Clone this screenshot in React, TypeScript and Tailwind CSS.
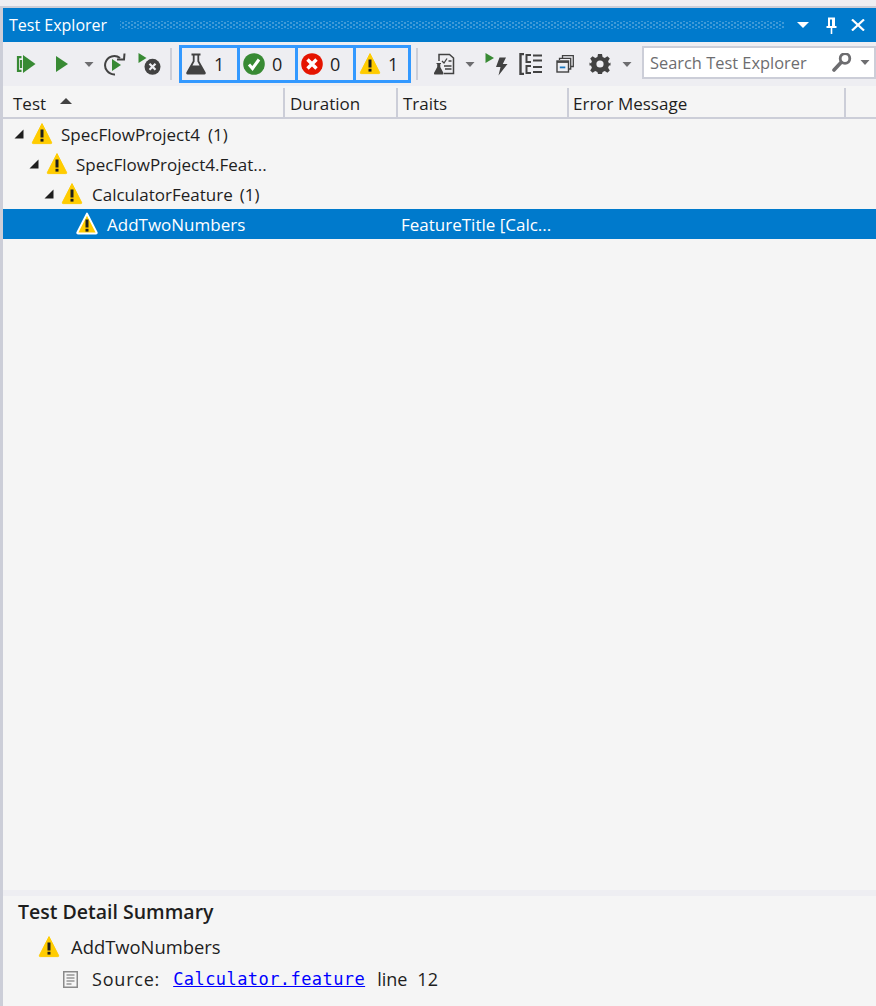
const font = '"Open Sans", "Noto Sans", sans-serif';

const Caret = ({ className = '', color = '#6d6d70' }: { className?: string; color?: string }) => (
  <svg width="10" height="5" viewBox="0 0 10 5" className={className}>
    <path d="M0.5 0H9.5L5 5Z" fill={color} />
  </svg>
);

const Warning = ({ selected = false, className = '' }: { selected?: boolean; className?: string }) => (
  <svg width="24" height="24" viewBox="0 0 24 24" className={className}>
    <path
      d="M12 1.6 L21.6 20.4 Q22 21.6 20.8 21.6 H3.2 Q2 21.6 2.4 20.4 Z"
      fill="#ffcc00"
      stroke={selected ? '#ffffff' : '#ffcc00'}
      strokeWidth={selected ? 2 : 1}
      strokeLinejoin="round"
    />
    <rect x="10.5" y="7.5" width="3" height="8" fill="#1e1e1e" />
    <rect x="10.5" y="16.8" width="3" height="2.8" fill="#1e1e1e" />
  </svg>
);

const Flask = ({ size = 22, color = '#424242' }: { size?: number; color?: string }) => (
  <svg width={size} height={size} viewBox="0 0 22 22">
    <path d="M6.5 0.5H15.5V2.5H14.2V8L20.7 19.5Q21.2 21.5 19.5 21.5H2.5Q0.8 21.5 1.3 19.5L7.8 8V2.5H6.5Z" fill={color} />
    <path d="M9.6 2.5H12.4V8.5L14.6 12.5H7.4L9.6 8.5Z" fill="#eeeef2" />
  </svg>
);

const RunAll = () => (
  <svg width="20" height="20" viewBox="0 0 20 20" className="ml-[16px]">
    <path d="M7 1L19.5 10L7 19Z" fill="#388a34" />
    <path d="M5.5 3.2H2V16.8H5.5M5 6V14" fill="none" stroke="#388a34" strokeWidth="2.2" />
  </svg>
);

const RunOne = () => (
  <svg width="14" height="18" viewBox="0 0 14 18" className="ml-[19px]">
    <path d="M1 1L13 9L1 17Z" fill="#388a34" />
  </svg>
);

const Rerun = () => (
  <svg width="22" height="24" viewBox="0 0 22 24" className="ml-[10px]">
    <path d="M16 6A9.2 9.2 0 1 0 11 22.4" fill="none" stroke="#424242" strokeWidth="2" />
    <path d="M13 7.5L20 7.5L20.5 1.5" fill="none" stroke="#424242" strokeWidth="2" />
    <path d="M8 7L17 13L8 19Z" fill="#388a34" />
  </svg>
);

const CancelRun = () => (
  <svg width="23" height="24" viewBox="0 0 23 24" className="ml-[12px]">
    <path d="M0.5 1L8.5 6L0.5 11Z" fill="#388a34" />
    <circle cx="14.5" cy="14.8" r="8" fill="#424242" />
    <path d="M11.5 11.8L17.5 17.8M17.5 11.8L11.5 17.8" stroke="#eeeef2" strokeWidth="2.2" />
  </svg>
);

const GreenCheck = () => (
  <svg width="22" height="22" viewBox="0 0 22 22">
    <circle cx="11" cy="11" r="10.8" fill="#388a34" />
    <path d="M6 11.5L9.5 15.5L16 6.5" fill="none" stroke="#ffffff" strokeWidth="3" />
  </svg>
);

const RedCross = () => (
  <svg width="22" height="22" viewBox="0 0 22 22">
    <circle cx="11" cy="11" r="10.8" fill="#e51400" />
    <path d="M6.5 6.5L15.5 15.5M15.5 6.5L6.5 15.5" stroke="#ffffff" strokeWidth="3.4" />
  </svg>
);

const Playlist = () => (
  <svg width="22" height="22" viewBox="0 0 22 22" className="ml-[15px]">
    <path d="M6 8V1.5H16.5L20.5 5V20.5H11" fill="none" stroke="#424242" strokeWidth="1.5" />
    <path d="M9 8L11 10L14 5.5M15.5 8H18.5M11 13H18.5M12 16H18.5" fill="none" stroke="#424242" strokeWidth="1.3" />
    <path d="M3.5 10H8V11H7.3V14L10.5 20Q11 21.5 9.5 21.5H2Q0.5 21.5 1 20L4.2 14V11H3.5Z" fill="#424242" />
  </svg>
);

const RunBolt = () => (
  <svg width="23" height="24" viewBox="0 0 23 24" className="ml-[10px]">
    <path d="M0.5 1L9 6L0.5 11Z" fill="#388a34" />
    <path d="M14.5 5.5H21L17.8 12H22.5L13.5 23.5L15.5 15H11Z" fill="#424242" />
  </svg>
);

const GroupList = () => (
  <svg width="23" height="22" viewBox="0 0 23 22" className="ml-[11px]">
    <path d="M5 1H1.5V21H5" fill="none" stroke="#424242" strokeWidth="2.4" />
    <path d="M12 2H7.5V9H12M12 13H7.5V20H12" fill="none" stroke="#424242" strokeWidth="2" />
    <path d="M14 2.5H23M14 7.5H23M14 14H23M14 19H23" stroke="#424242" strokeWidth="1.8" />
  </svg>
);

const CopyIcon = () => (
  <svg width="18" height="18" viewBox="0 0 18 18" className="ml-[14px]">
    <path d="M6.5 3V0.7H17.3V11.5H15" fill="none" stroke="#424242" strokeWidth="1.3" />
    <path d="M3.5 5V3.3H14.7V14H13" fill="none" stroke="#424242" strokeWidth="1.3" />
    <rect x="1" y="6" width="11.5" height="11" fill="none" stroke="#424242" strokeWidth="1.4" />
    <path d="M1 7H12.5" stroke="#424242" strokeWidth="1.8" />
    <rect x="3.8" y="11.5" width="5.5" height="1.8" fill="#1c78c0" />
  </svg>
);

const Gear = () => (
  <svg width="22" height="22" viewBox="0 0 22 22" className="ml-[15px]">
    <path
      d="M9 1H13L13.6 4L15.8 4.9L18.4 3.2L20.8 5.6L19.1 8.2L20 10.4L21.5 9.5V12.5L20 12.6L19.1 14.8L20.8 17.4L18.4 19.8L15.8 18.1L13.6 19L13 21H9L8.4 19L6.2 18.1L3.6 19.8L1.2 17.4L2.9 14.8L2 12.6L0.5 12.5V9.5L2 10.4L2.9 8.2L1.2 5.6L3.6 3.2L6.2 4.9L8.4 4Z"
      fill="#424242"
    />
    <circle cx="11" cy="11" r="3.6" fill="#eeeef2" />
  </svg>
);

const SearchIcon = () => (
  <svg width="20" height="20" viewBox="0 0 20 20" className="ml-auto">
    <circle cx="13" cy="5.5" r="4.8" fill="none" stroke="#6d6d70" strokeWidth="2.8" />
    <path d="M9 9.5L2 17" stroke="#6d6d70" strokeWidth="3.6" strokeLinecap="round" />
  </svg>
);

const SourceIcon = () => (
  <svg width="15" height="17" viewBox="0 0 15 17">
    <rect x="0.75" y="0.75" width="13.5" height="15.5" fill="#f6f6f6" stroke="#8a8a8a" strokeWidth="1.5" />
    <path d="M3.5 4H11.5M3.5 7H11.5M3.5 10H11.5M3.5 13H8.5" stroke="#666666" />
  </svg>
);

const Expander = ({ className = '' }: { className?: string }) => (
  <svg width="10" height="10" viewBox="0 0 10 10" className={className}>
    <path d="M9.5 0.5V9.5H0.5Z" fill="#1e1e1e" />
  </svg>
);

const FilterCell = ({ icon, count, last = false }: { icon: React.ReactNode; count: number; last?: boolean }) => (
  <div
    className={`flex h-[38px] w-[58px] items-center border-[3px] border-[#3399ff] pl-[3px] ${last ? '' : 'border-r-0'}`}
  >
    <span className="flex w-[26px] items-center">{icon}</span>
    <span className="ml-[3px] text-[18px] text-[#1e1e1e]">{count}</span>
  </div>
);

const HeaderCell = ({ label, className = '', children }: { label: string; className?: string; children?: React.ReactNode }) => (
  <div className={`flex h-full items-center border-r-2 border-[#ccced8] text-[17px] text-[#1e1e1e] ${className}`}>
    <span className="mt-[3px]">{label}</span>
    {children}
  </div>
);

const Row = ({ children, className = '' }: { children: React.ReactNode; className?: string }) => (
  <div className={`flex h-[30px] items-center text-[17px] text-[#1e1e1e] [&>span]:mt-[2px] ${className}`}>{children}</div>
);

export default function App() {
  return (
    <div
      className="flex h-[1006px] w-[876px] flex-col overflow-hidden bg-[#eeeef2] pt-[6px]"
      style={{ fontFamily: font }}
    >
      <div className="flex min-h-0 flex-1 flex-col border-t-2 border-l-[3px] border-[#ccced8]">
        {/* Title bar */}
        <div className="flex h-[34px] shrink-0 items-center bg-[#007acc] pl-[6px] text-white">
          <span className="w-[111px] text-[16px]">Test Explorer</span>
          <div className="h-[8px] w-[665px] bg-[radial-gradient(#3f9ad8_1px,transparent_1.2px),radial-gradient(#3f9ad8_1px,transparent_1.2px)] bg-[length:6px_4px] bg-[position:0_0,3px_2px]" />
          <svg width="12" height="6" viewBox="0 0 12 6" className="ml-[12px]">
            <path d="M0 0H12L6 6Z" fill="#ffffff" />
          </svg>
          <svg width="11" height="17" viewBox="0 0 11 17" className="ml-[17px]">
            <path d="M2 0.5H9V9H10.5V11H0.5V9H2ZM4 2.5V9H6V2.5ZM4.7 11H6.3V17H4.7Z" fill="#ffffff" fillRule="evenodd" />
          </svg>
          <svg width="14" height="12" viewBox="0 0 14 12" className="ml-[14px]">
            <path d="M1 0.5L13 11.5M13 0.5L1 11.5" stroke="#ffffff" strokeWidth="2.2" />
          </svg>
        </div>

        {/* Toolbar */}
        <div className="flex h-[44px] shrink-0 items-center bg-[#eeeef2]">
          <div className="-ml-[3px] flex items-center">
            <RunAll />
            <RunOne />
            <Caret className="ml-[15px]" />
            <Rerun />
            <CancelRun />
            <div className="ml-[9px] h-[32px] w-[2px] bg-[#ccced8]" />
            <div className="ml-[7px] flex">
              <FilterCell icon={<Flask />} count={1} />
              <FilterCell icon={<GreenCheck />} count={0} />
              <FilterCell icon={<RedCross />} count={0} />
              <FilterCell icon={<Warning className="-ml-[1px]" />} count={1} last />
            </div>
            <div className="ml-[5px] h-[32px] w-[2px] bg-[#ccced8]" />
            <Playlist />
            <Caret className="ml-[10px]" />
            <RunBolt />
            <GroupList />
            <CopyIcon />
            <Gear />
            <Caret className="ml-[11px]" />
            <div className="mb-[3px] ml-[10px] flex h-[33px] w-[234px] items-center border-2 border-[#ccced8] bg-white pl-[6px] pr-[4px]">
              <span className="mt-[2px] text-[16.4px] text-[#6d6d70]">Search Test Explorer</span>
              <SearchIcon />
              <Caret className="ml-[8px]" />
            </div>
          </div>
        </div>

        {/* Column headers */}
        <div className="flex h-[33px] shrink-0 border-b-2 border-[#ccced8] bg-[#f5f5f5] pt-[2px]">
          <HeaderCell label="Test" className="w-[282px] pl-[10px]">
            <svg width="12" height="6" viewBox="0 0 12 6" className="ml-[14px] -mt-[3px]">
              <path d="M0 6H12L6 0Z" fill="#424242" />
            </svg>
          </HeaderCell>
          <HeaderCell label="Duration" className="w-[113px] pl-[5px]" />
          <HeaderCell label="Traits" className="w-[171px] pl-[5px]" />
          <HeaderCell label="Error Message" className="w-[277px] pl-[4px]" />
        </div>

        {/* Tree */}
        <div className="min-h-0 flex-1 bg-[#f5f5f5]">
          <Row className="pl-[11px]">
            <Expander />
            <Warning className="ml-[6px]" />
            <span className="ml-[7px]">SpecFlowProject4</span>
            <span className="ml-[8px]">(1)</span>
          </Row>
          <Row className="pl-[26px]">
            <Expander />
            <Warning className="ml-[6px]" />
            <span className="ml-[7px]">SpecFlowProject4.Feat...</span>
          </Row>
          <Row className="pl-[41px]">
            <Expander />
            <Warning className="ml-[6px]" />
            <span className="ml-[8px]">CalculatorFeature</span>
            <span className="ml-[7px]">(1)</span>
          </Row>
          <Row className="bg-[#007acc] pl-[72px] text-white">
            <Warning selected />
            <span className="ml-[8px] w-[294px]">AddTwoNumbers</span>
            <span>FeatureTitle [Calc...</span>
          </Row>
        </div>

        {/* Detail summary */}
        <div className="h-[116px] shrink-0 border-t-[6px] border-[#eeeef2] bg-[#f5f5f5] pl-[15px] text-[#1e1e1e]">
          <div className="mt-[1px] text-[19.5px] font-semibold">Test Detail Summary</div>
          <div className="mt-[7px] flex items-center pl-[19px] text-[18.4px]">
            <Warning />
            <span className="ml-[10px]">AddTwoNumbers</span>
          </div>
          <div className="mt-[5px] flex items-center pl-[45px] text-[18px]">
            <SourceIcon />
            <span className="ml-[14px] tracking-[0.8px]">Source:</span>
            <a
              href="#"
              className="ml-[13px] text-[17px] tracking-[0.43px] text-[#0000ff] underline"
              style={{ fontFamily: '"DejaVu Sans Mono", monospace' }}
            >
              Calculator.feature
            </a>
            <span className="ml-[12px]">line</span>
            <span className="ml-[10px]">12</span>
          </div>
        </div>
      </div>
    </div>
  );
}
